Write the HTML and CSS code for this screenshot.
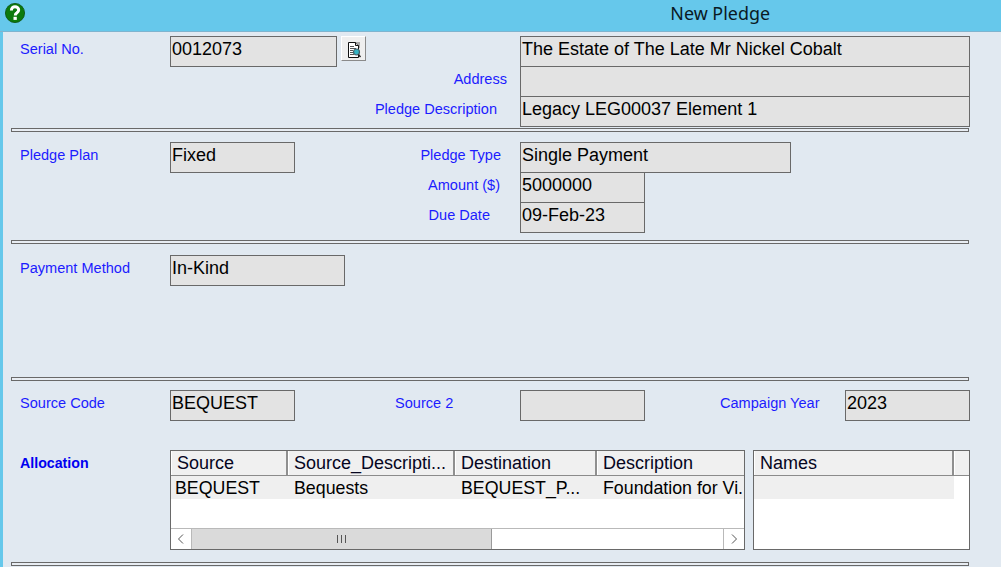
FILE: index.html
```html
<!DOCTYPE html>
<html lang="en">
<head>
<meta charset="utf-8">
<title>New Pledge</title>
<link rel="stylesheet" href="styles.css">
</head>
<body>
<header class="titlebar">
  <svg class="help" width="20" height="20" viewBox="0 0 20 20" aria-label="Help">
    <circle cx="10" cy="10" r="9.6" fill="#0c7a0c" stroke="#0a4f0a" stroke-width=".8"/>
    <path d="M6.400 7.400C6.400 5 8 3.800 10 3.800s3.700 1.200 3.700 3.200c0 1.600-1 2.300-2 3-.9.600-1.400 1.200-1.400 2.400" fill="none" stroke="#fff" stroke-width="3"/>
    <rect x="8.500" y="13.800" width="3.300" height="3.100" fill="#fff"/>
  </svg>
  <h1 class="title">New Pledge</h1>
</header>
<main class="form">
  <section class="grid s1">
    <label class="lbl">Serial No.</label>
    <div class="mid">
      <div class="field w167">0012073</div>
      <button class="docbtn" type="button" aria-label="View">
        <svg width="18" height="18" viewBox="0 0 18 18">
          <path d="M10 1h5v6h-5z" fill="#a9a9a9"/>
          <path d="M3.500 1.500h7l3 3v12h-10z" fill="#fff" stroke="#111" stroke-width="1"/>
          <path d="M10.500 1.500v3h3" fill="#ddd" stroke="#111"/>
          <path d="M5 5.500h4M5 7.500h6M5 9.500h3M5 11.500h3M5 13.500h4" stroke="#555" stroke-width="1"/>
          <circle cx="11.500" cy="11" r="3" fill="#35b4c4" stroke="#46606a" stroke-width="1.200"/>
          <path d="M13.500 13.500l2 2.500" stroke="#222" stroke-width="1.400"/>
        </svg>
      </button>
    </div>
    <div class="field wide">The Estate of The Late Mr Nickel Cobalt</div>

    <span></span>
    <label class="lbl end pr13">Address</label>
    <div class="field wide"></div>

    <span></span>
    <label class="lbl end pr23">Pledge Description</label>
    <div class="field wide">Legacy LEG00037 Element 1</div>
  </section>
  <hr class="rule r1">

  <section class="grid s2">
    <label class="lbl">Pledge Plan</label>
    <div class="mid between">
      <div class="field w125">Fixed</div>
      <label class="lbl pr19">Pledge Type</label>
    </div>
    <div class="field w271">Single Payment</div>

    <span></span>
    <label class="lbl end pr20">Amount ($)</label>
    <div class="field w125">5000000</div>

    <span></span>
    <label class="lbl end pr30">Due Date</label>
    <div class="field w125">09-Feb-23</div>
  </section>
  <hr class="rule r2">

  <section class="grid s3">
    <label class="lbl">Payment Method</label>
    <div class="mid"><div class="field w175">In-Kind</div></div>
  </section>
  <hr class="rule r3">

  <section class="grid s4">
    <label class="lbl">Source Code</label>
    <div class="mid">
      <div class="field w125">BEQUEST</div>
      <label class="lbl src2">Source 2</label>
    </div>
    <div class="trio">
      <div class="field w125"></div>
      <label class="lbl camp">Campaign Year</label>
      <div class="field w125">2023</div>
    </div>
  </section>

  <section class="alloc">
    <label class="lbl strong">Allocation</label>
    <div class="gridview main-grid">
      <div class="head cols4">
        <div class="hcell">Source</div>
        <div class="hcell">Source_Descripti...</div>
        <div class="hcell">Destination</div>
        <div class="hcell">Description</div>
      </div>
      <div class="datarow cols4">
        <div class="dcell">BEQUEST</div>
        <div class="dcell">Bequests</div>
        <div class="dcell">BEQUEST_P...</div>
        <div class="dcell">Foundation for Vi.</div>
      </div>
      <div class="hscroll">
        <div class="arrow left"><svg width="8" height="10" viewBox="0 0 8 10"><path d="M6 .5L1.500 5 6 9.500" fill="none" stroke="#555"/></svg></div>
        <div class="thumb"><svg width="11" height="8" viewBox="0 0 11 8"><path d="M1.500 0v8M5.500 0v8M9.500 0v8" stroke="#555" stroke-width="1"/></svg></div>
        <div class="track"></div>
        <div class="arrow right"><svg width="8" height="10" viewBox="0 0 8 10"><path d="M2 .5L6.500 5 2 9.500" fill="none" stroke="#555"/></svg></div>
      </div>
    </div>
    <div class="gridview side-grid">
      <div class="head cols2">
        <div class="hcell">Names</div>
        <div class="hcell"></div>
      </div>
      <div class="datarow side-row"></div>
    </div>
  </section>
  <hr class="rule r4">
</main>
</body>
</html>
```
FILE: styles.css
```css
* { box-sizing: border-box; }
html, body { margin: 0; height: 100%; overflow: hidden; }
body {
  background: #e1e9f1;
  font-family: "Liberation Sans", Arial, sans-serif;
  color: #000;
}
.titlebar {
  height: 32px;
  display: flex;
  align-items: flex-start;
  background: #66c8eb;
  border-bottom: 1px solid #7fb4cf;
}
.help { margin: 3px 0 0 5px; flex: none; }
.title {
  margin: 1px 231px 0 auto;
  font: 400 17.900px/24px "Noto Sans", sans-serif;
  color: #0a1a24;
}
.form {
  height: 535px;
  border-left: 3px solid #66c8eb;
  padding: 4px 0 0 8px;
  overflow: hidden;
}
.grid {
  display: grid;
  grid-template-columns: 150px 350px 450px;
  grid-auto-rows: 30px;
  padding-left: 9px;
  width: 959px;
}
.mid { display: flex; align-items: flex-start; }
.between { justify-content: space-between; }
.lbl {
  font-size: 14.550px;
  line-height: 27px;
  color: #1c1cff;
  white-space: nowrap;
}
.end { text-align: right; }
.pr13 { padding-right: 13px; }
.pr23 { padding-right: 23px; }
.pr20 { padding-right: 20px; }
.pr30 { padding-right: 30px; }
.pr19 { padding-right: 19px; }
.field {
  height: 31px;
  background: #e3e3e3;
  border: 1px solid #696969;
  font-size: 18px;
  line-height: 25px;
  padding-left: 1px;
  white-space: nowrap;
  overflow: hidden;
}
.wide { width: 450px; }
.w125 { width: 125px; }
.w167 { width: 167px; }
.w175 { width: 175px; }
.w271 { width: 271px; }
.docbtn {
  width: 25px;
  height: 25px;
  margin-left: 4px;
  padding: 2px 0 0 3px;
  display: block;
  background: #efefef;
  border: 1px solid;
  border-color: #fff #8a8a8a #8a8a8a #fff;
}
.docbtn svg { display: block; }
.r1 { margin-top: 2px; }
.rule {
  height: 4px;
  width: 958px;
  margin-bottom: 0;
  margin-left: 0;
  margin-right: 0;
  border: 1px solid #696969;
  background: #e8edf3;
}
.s2 { margin-top: 10px; }
.r2 { margin-top: 8px; }
.s3 { margin-top: 11px; }
.r3 { margin-top: 92px; }
.s4 { margin-top: 9px; }
.r4 { margin-top: 12px; }
.src2 { margin-left: 100px; }
.trio { display: flex; align-items: flex-start; }
.camp { width: 100px; margin-left: 75px; margin-right: 25px; }
.alloc {
  margin-top: 30px;
  padding-left: 9px;
  display: flex;
  align-items: flex-start;
}
.strong { font-weight: 700; font-size: 14.200px; width: 150px; color: #0000f0; }
.gridview {
  height: 100px;
  background: #fff;
  border: 1px solid #696969;
  display: flex;
  flex-direction: column;
  overflow: hidden;
  flex: none;
}
.main-grid { width: 575px; }
.side-grid { width: 217px; margin-left: 8px; }
.head {
  height: 25px;
  background: #f0f0f0;
  border-bottom: 1px solid #8b8b8b;
  flex: none;
}
.cols4 {
  display: grid;
  grid-template-columns: 117px 167px 142px 147px;
}
.cols2 {
  display: grid;
  grid-template-columns: 200px 15px;
}
.hcell {
  font-size: 18px;
  line-height: 25px;
  padding-left: 5px;
  border-right: 2px solid #8f8f8f;
  border-left: 1px solid #fff;
  color: #05051e;
  white-space: nowrap;
  overflow: hidden;
}
.hcell:last-child { border-right: 0; }
.datarow { height: 23px; background: #efefef; flex: none; }
.dcell {
  font-size: 17.800px;
  line-height: 24px;
  padding-left: 6px;
  white-space: nowrap;
}
.dcell:first-child { padding-left: 4px; }
.side-row { width: 200px; }
.hscroll {
  margin-top: auto;
  height: 21px;
  display: flex;
  border-top: 1px solid #b9b9b9;
  flex: none;
}
.arrow {
  width: 21px;
  display: flex;
  align-items: center;
  justify-content: center;
  flex: none;
  background: #fff;
}
.arrow.left { border-right: 1px solid #b9b9b9; }
.arrow.right { border-left: 1px solid #b9b9b9; }
.thumb {
  width: 300px;
  background: #dadada;
  border-right: 1px solid #9a9a9a;
  display: flex;
  align-items: center;
  justify-content: center;
  flex: none;
}
.track { flex: 1; background: #fff; }
```
